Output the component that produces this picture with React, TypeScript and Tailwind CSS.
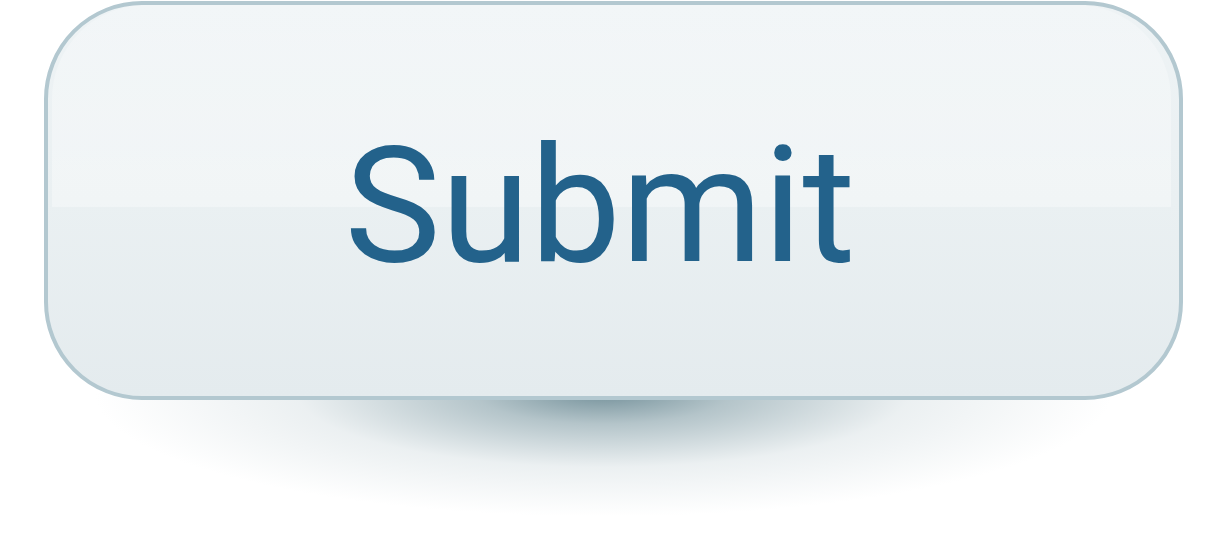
import React from 'react';

const SubmitButton: React.FC = () => (
  <div className="relative w-[1139px] h-[399px]">
    {/* soft shadow pooled under the button */}
    <div className="absolute left-[40px] top-[392px] w-[1060px] h-[130px] bg-[radial-gradient(ellipse_48%_95%_at_49%_0%,rgba(110,140,150,0.95)_0%,rgba(140,165,173,0.65)_25%,rgba(190,205,210,0.3)_60%,rgba(255,255,255,0)_100%)]" />
    <button className="relative w-full h-full rounded-[98px] border-[4px] border-[#b3c8d0] bg-[linear-gradient(180deg,#eef3f5_0%,#eaf0f2_50%,#e4ebee_100%)] overflow-hidden flex items-center justify-center">
      {/* gloss on the upper half */}
      <div className="absolute left-[4px] right-[8px] top-0 h-[202px] rounded-t-[94px] bg-[linear-gradient(180deg,rgba(255,255,255,0.25)_0%,rgba(255,255,255,0.35)_100%)]" />
      <span className="relative pr-[27px] pt-[10px] font-['Roboto',sans-serif] text-[162px] leading-none text-[#23628b]">
        Submit
      </span>
    </button>
  </div>
);

export default function App() {
  return (
    <div className="w-[1205px] h-[538px] bg-white pl-[44px] pt-[1px]">
      <SubmitButton />
    </div>
  );
}
